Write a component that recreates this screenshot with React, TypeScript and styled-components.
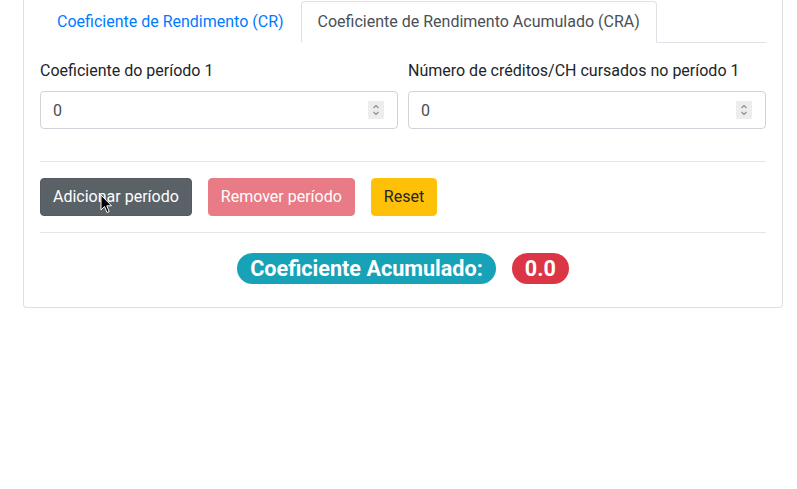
import React from "react";
import styled, { createGlobalStyle } from "styled-components";

const GlobalStyle = createGlobalStyle`
  html, body { margin: 0; padding: 0; background: #fff; }
  body {
    font-family: Roboto, "Liberation Sans", Arial, sans-serif;
    font-size: 16px;
    line-height: 1.5;
    color: #212529;
    overflow: hidden;
  }
  * { box-sizing: border-box; }
`;

const Page = styled.div`
  display: flow-root;
  padding-left: 23px;
  position: relative;
  height: 489px;
`;

const Card = styled.div`
  width: 760px;
  margin-top: -16px;
  border: 1px solid rgba(0, 0, 0, 0.125);
  border-radius: 4px;
  background: #fff;
`;

const CardBody = styled.div`
  padding: 16px;
`;

const Tabs = styled.ul`
  display: flex;
  list-style: none;
  margin: 0;
  padding: 0;
  border-bottom: 1px solid #dee2e6;
`;

const Tab = styled.li<{ $active?: boolean }>`
  margin-bottom: -1px;
  padding: 8px 16px;
  border: 1px solid transparent;
  border-color: ${(p) => (p.$active ? "#dee2e6 #dee2e6 #fff" : "transparent")};
  border-top-left-radius: 4px;
  border-top-right-radius: 4px;
  background: #fff;
  color: ${(p) => (p.$active ? "#495057" : "#007bff")};
  line-height: 24px;
  cursor: pointer;
`;

const FormRow = styled.div`
  display: grid;
  grid-template-columns: 1fr 1fr;
  column-gap: 10px;
  padding: 16px 0;
`;

const Group = styled.div`
  display: flex;
  flex-direction: column;
`;

const Label = styled.label`
  line-height: 24px;
  margin-bottom: 8px;
`;

const InputWrap = styled.div`
  position: relative;
`;

const Input = styled.input`
  width: 100%;
  height: 38px;
  padding: 6px 12px;
  border: 1px solid #ced4da;
  border-radius: 4px;
  font: inherit;
  color: #495057;
  background: #fff;
  outline: none;
`;

const Spinner = styled.span`
  position: absolute;
  right: 14px;
  top: 10px;
  width: 16px;
  height: 18px;
  background: #ededed;
  display: flex;
  align-items: center;
  justify-content: center;
  pointer-events: none;
`;

const Divider = styled.hr`
  margin: 16px 0;
  border: 0;
  border-top: 1px solid rgba(0, 0, 0, 0.1);
`;

const Buttons = styled.div`
  display: flex;
  gap: 16px;
`;

const variants = {
  secondary: { bg: "#5a6268", border: "#545b62", color: "#fff", opacity: 1 },
  danger: { bg: "#dc3545", border: "#dc3545", color: "#fff", opacity: 0.65 },
  warning: { bg: "#ffc107", border: "#ffc107", color: "#212529", opacity: 1 },
};

const Button = styled.button<{ $variant: keyof typeof variants }>`
  height: 38px;
  padding: 6px 12px;
  font: inherit;
  line-height: 24px;
  border-radius: 4px;
  border: 1px solid ${(p) => variants[p.$variant].border};
  background: ${(p) => variants[p.$variant].bg};
  color: ${(p) => variants[p.$variant].color};
  opacity: ${(p) => variants[p.$variant].opacity};
`;

const ResultRow = styled.h3`
  display: flex;
  justify-content: center;
  gap: 16px;
  margin: 0 0 8px;
  padding-top: 4px;
  height: 34px;
  font-size: 28px;
  font-weight: 500;
`;

const Badge = styled.span<{ $color: string }>`
  display: inline-block;
  height: 31px;
  padding: 5px 13px 0;
  font-size: 21.6px;
  font-weight: 700;
  line-height: 1;
  color: #fff;
  background: ${(p) => p.$color};
  border-radius: 210px;
  white-space: nowrap;
`;

const Cursor = styled.svg`
  position: absolute;
  left: 100px;
  top: 194px;
  pointer-events: none;
`;

const SpinIcon = () => (
  <svg width="10" height="14" viewBox="0 0 10 14">
    <path d="M2.5 5 L5 2.5 L7.5 5" fill="none" stroke="#8a8a8a" strokeWidth="1.1" />
    <path d="M2.5 9 L5 11.5 L7.5 9" fill="none" stroke="#8a8a8a" strokeWidth="1.1" />
  </svg>
);

const NumberField = ({ label }: { label: string }) => (
  <Group>
    <Label>{label}</Label>
    <InputWrap>
      <Input type="text" defaultValue="0" />
      <Spinner>
        <SpinIcon />
      </Spinner>
    </InputWrap>
  </Group>
);

export default function App() {
  return (
    <Page>
      <GlobalStyle />
      <Card>
        <CardBody>
          <Tabs>
            <Tab>Coeficiente de Rendimento (CR)</Tab>
            <Tab $active>Coeficiente de Rendimento Acumulado (CRA)</Tab>
          </Tabs>
          <FormRow>
            <NumberField label="Coeficiente do período 1" />
            <NumberField label="Número de créditos/CH cursados no período 1" />
          </FormRow>
          <Divider />
          <Buttons>
            <Button $variant="secondary">Adicionar período</Button>
            <Button $variant="danger" disabled>
              Remover período
            </Button>
            <Button $variant="warning">Reset</Button>
          </Buttons>
          <Divider />
          <ResultRow>
            <Badge $color="#17a2b8">Coeficiente Acumulado:</Badge>
            <Badge $color="#dc3545">0.0</Badge>
          </ResultRow>
        </CardBody>
      </Card>
      <Cursor width="13" height="20" viewBox="0 0 13 20">
        <path
          d="M1 1 L1 16 L4.5 12.5 L7 18.5 L9.2 17.6 L6.8 11.8 L11.5 11.8 Z"
          fill="#000"
          stroke="#fff"
          strokeWidth="1"
          strokeLinejoin="round"
        />
      </Cursor>
    </Page>
  );
}
